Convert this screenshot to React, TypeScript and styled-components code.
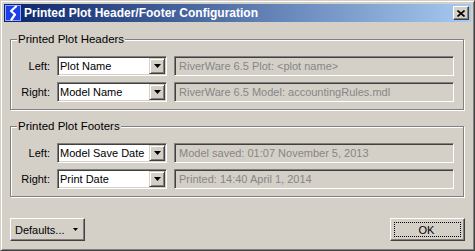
import React from "react";
import styled, { createGlobalStyle } from "styled-components";

const GlobalStyle = createGlobalStyle`
  html, body {
    margin: 0;
    padding: 0;
    background: #d4d0c8;
  }
  body {
    font-family: "Liberation Sans", Arial, sans-serif;
    font-size: 11px;
    color: #000;
  }
`;

interface PlotRow {
  side: string;
  choice: string;
  preview: string;
}

const headers: PlotRow[] = [
  { side: "Left:", choice: "Plot Name", preview: "RiverWare 6.5 Plot: <plot name>" },
  { side: "Right:", choice: "Model Name", preview: "RiverWare 6.5 Model: accountingRules.mdl" },
];

const footers: PlotRow[] = [
  { side: "Left:", choice: "Model Save Date", preview: "Model saved: 01:07 November 5, 2013" },
  { side: "Right:", choice: "Print Date", preview: "Printed: 14:40 April 1, 2014" },
];

const RiverIcon = () => (
  <svg width="16" height="16" viewBox="0 0 16 16">
    <rect x="0" y="0" width="16" height="16" fill="#1f3fe6" />
    <rect x="0.5" y="0.5" width="15" height="15" fill="none" stroke="#8fa8ff" strokeWidth="1" />
    <path
      d="M11 1.5 L6 6 L10 9.5 L6.5 14.5"
      fill="none"
      stroke="#fff"
      strokeWidth="2.2"
      strokeLinejoin="round"
      strokeLinecap="round"
    />
  </svg>
);

const CloseGlyph = () => (
  <svg width="8" height="7" viewBox="0 0 8 7">
    <path d="M0.5 0.5 L7.5 6.5 M7.5 0.5 L0.5 6.5" stroke="#000" strokeWidth="1.6" />
  </svg>
);

const ComboArrow = () => (
  <svg width="7" height="4" viewBox="0 0 7 4">
    <path d="M0 0 H7 L3.5 4 Z" fill="#000" />
  </svg>
);

const MenuArrow = () => (
  <svg width="5" height="3" viewBox="0 0 5 3">
    <path d="M0 0 H5 L2.5 3 Z" fill="#000" />
  </svg>
);

export default function App() {
  const renderRows = (rows: PlotRow[]) =>
    rows.map((r) => (
      <React.Fragment key={r.side}>
        <SideLabel>{r.side}</SideLabel>
        <Combo>
          <ComboText>{r.choice}</ComboText>
          <ComboButton>
            <ComboArrow />
          </ComboButton>
        </Combo>
        <PreviewField>{r.preview}</PreviewField>
      </React.Fragment>
    ));

  return (
    <>
      <GlobalStyle />
      <Window>
        <TitleBar>
          <RiverIcon />
          <Title>Printed Plot Header/Footer Configuration</Title>
          <CloseButton>
            <CloseGlyph />
          </CloseButton>
        </TitleBar>
        <Body>
          <Group $top={11}>
            <Legend>Printed Plot Headers</Legend>
            <RowGrid>{renderRows(headers)}</RowGrid>
          </Group>
          <Group $top={10}>
            <Legend>Printed Plot Footers</Legend>
            <RowGrid>{renderRows(footers)}</RowGrid>
          </Group>
          <ButtonRow>
            <PushButton>
              <span>Defaults...</span>
              <MenuArrow />
            </PushButton>
            <PushButton $focused>
              <span>OK</span>
            </PushButton>
          </ButtonRow>
        </Body>
      </Window>
    </>
  );
}

const Window = styled.div`
  box-sizing: border-box;
  width: 475px;
  height: 251px;
  display: flex;
  flex-direction: column;
  padding: 3px;
  background: #d4d0c8;
  border: 1px solid;
  border-color: #d4d0c8 #404040 #404040 #d4d0c8;
  box-shadow: inset 1px 1px 0 #fff, inset -1px -1px 0 #808080;
`;

const TitleBar = styled.div`
  height: 18px;
  display: flex;
  align-items: center;
  padding: 0 2px 0 1px;
  background: linear-gradient(to right, #0a246a, #a6caf0);

  svg {
    flex: none;
  }
`;

const Title = styled.div`
  flex: 1;
  margin-left: 3px;
  color: #fff;
  font-weight: bold;
  font-size: 12px;
  white-space: nowrap;
`;

const CloseButton = styled.div`
  box-sizing: border-box;
  width: 16px;
  height: 14px;
  display: flex;
  align-items: center;
  justify-content: center;
  background: #d4d0c8;
  border: 1px solid;
  border-color: #fff #404040 #404040 #fff;
  box-shadow: inset -1px -1px 0 #808080;
`;

const Body = styled.div`
  flex: 1;
  display: flex;
  flex-direction: column;
  padding: 0 6px 6px 6px;
`;

const Group = styled.fieldset<{ $top: number }>`
  box-sizing: border-box;
  margin: ${(p) => p.$top}px 1px 0 0;
  padding: 10px 9px 7px 9px;
  min-width: 0;
  border: 1px solid #808080;
  box-shadow: inset 1px 1px 0 #fff, 1px 1px 0 #fff;
`;

const Legend = styled.legend`
  padding: 0 1px 0 1px;
  margin-left: -3px;
  line-height: 13px;
  font-size: 11.5px;
  background: #d4d0c8;
`;

const RowGrid = styled.div`
  display: grid;
  grid-template-columns: 30px 110px 1fr;
  column-gap: 7px;
  row-gap: 6px;
  align-items: center;
`;

const SideLabel = styled.div`
  text-align: right;
  white-space: nowrap;
`;

const Sunken = styled.div`
  box-sizing: border-box;
  height: 20px;
  display: flex;
  align-items: center;
  border: 1px solid;
  border-color: #808080 #fff #fff #808080;
  box-shadow: inset 1px 1px 0 #404040, inset -1px -1px 0 #d4d0c8;
`;

const Combo = styled(Sunken)`
  background: #fff;
  padding: 1px 1px 1px 2px;
`;

const ComboText = styled.div`
  flex: 1;
  white-space: nowrap;
`;

const ComboButton = styled.div`
  box-sizing: border-box;
  width: 16px;
  height: 16px;
  display: flex;
  align-items: center;
  justify-content: center;
  background: #d4d0c8;
  border: 1px solid;
  border-color: #d4d0c8 #404040 #404040 #d4d0c8;
  box-shadow: inset 1px 1px 0 #fff, inset -1px -1px 0 #808080;
`;

const PreviewField = styled(Sunken)`
  background: #d4d0c8;
  padding-left: 4px;
  color: #868686;
  white-space: nowrap;
  overflow: hidden;
`;

const ButtonRow = styled.div`
  margin-top: auto;
  display: flex;
  justify-content: space-between;
`;

const PushButton = styled.div<{ $focused?: boolean }>`
  box-sizing: border-box;
  position: relative;
  width: 75px;
  height: 23px;
  display: flex;
  align-items: center;
  justify-content: ${(p) => (p.$focused ? "center" : "space-between")};
  padding: 0 6px 0 4px;
  background: #d4d0c8;
  border: 1px solid;
  border-color: #fff #404040 #404040 #fff;
  box-shadow: inset -1px -1px 0 #808080;

  &::after {
    content: "";
    display: ${(p) => (p.$focused ? "block" : "none")};
    position: absolute;
    inset: 3px;
    border: 1px dotted #000;
  }
`;
